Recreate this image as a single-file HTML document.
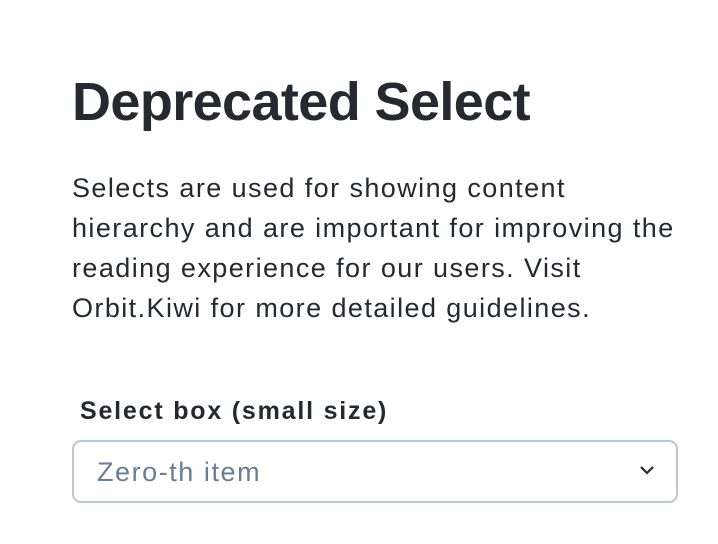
<!DOCTYPE html>
<html><head><meta charset="utf-8"><style>
html,body{margin:0;padding:0;background:#fff;width:718px;height:544px;overflow:hidden}
body{font-family:"Liberation Sans",sans-serif;color:#252a31;position:relative}
h1{position:absolute;left:72px;top:70px;margin:0;font-size:54px;line-height:64px;font-weight:bold;letter-spacing:-0.6px;white-space:nowrap}
p{position:absolute;left:72px;top:168px;margin:0;font-size:27px;line-height:40px;white-space:nowrap;letter-spacing:1.42px}
.lab{position:absolute;left:80px;top:395px;font-size:25px;font-weight:bold;line-height:32px;white-space:nowrap;color:#252a31;letter-spacing:1.8px}
.box{position:absolute;left:72px;top:440px;border:2px solid #bac7d5;border-radius:9px;box-sizing:border-box;width:606px;height:63px}
.box span{position:absolute;left:23px;top:14px;font-size:27px;line-height:32px;color:#697d95;letter-spacing:1.55px}
.box svg{position:absolute;left:564px;top:21px}
</style></head><body>
<h1>Deprecated Select</h1>
<p>Selects are used for showing content<br>hierarchy and are important for improving the<br>reading experience for our users. Visit<br>Orbit.Kiwi for more detailed guidelines.</p>
<div class="lab">Select box (small size)</div>
<div class="box"><span>Zero-th item</span><svg width="18" height="14" viewBox="0 0 18 14"><path d="M3 4 L9 10 L15 4" fill="none" stroke="#252a31" stroke-width="2.2"/></svg></div>
</body></html>
